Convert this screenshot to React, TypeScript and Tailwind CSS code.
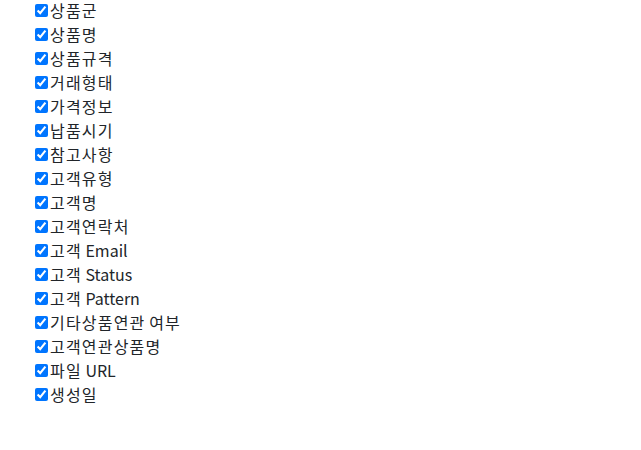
import React from 'react';

const fields = [
  '상품군',
  '상품명',
  '상품규격',
  '거래형태',
  '가격정보',
  '납품시기',
  '참고사항',
  '고객유형',
  '고객명',
  '고객연락처',
  '고객 Email',
  '고객 Status',
  '고객 Pattern',
  '기타상품연관 여부',
  '고객연관상품명',
  '파일 URL',
  '생성일',
];

// Hangul runs get a touch of tracking so they sit as wide as the original font
const FieldLabel: React.FC<{ text: string }> = ({ text }) => {
  const parts = text.split(/([가-힣]+)/).filter(Boolean);
  return (
    <span className="ml-[2px]">
      {parts.map((part, i) =>
        /[가-힣]/.test(part) ? (
          <span key={i} className="tracking-[1.2px]">
            {part}
          </span>
        ) : (
          <span key={i}>{part}</span>
        )
      )}
    </span>
  );
};

const App: React.FC = () => {
  return (
    <div
      className="min-h-[450px] bg-white pl-[35px] text-[16px] font-normal leading-[24px] text-[#212529]"
      style={{ fontFamily: '"Noto Sans CJK KR", "Noto Sans", sans-serif' }}
    >
      <ul className="-mt-[2px] flex flex-col">
        {fields.map((field) => (
          <li key={field} className="flex h-[24px] items-center">
            <input
              type="checkbox"
              defaultChecked
              className="m-0 h-[13px] w-[13px] accent-[#0075ff]"
            />
            <FieldLabel text={field} />
          </li>
        ))}
      </ul>
    </div>
  );
};

export default App;
